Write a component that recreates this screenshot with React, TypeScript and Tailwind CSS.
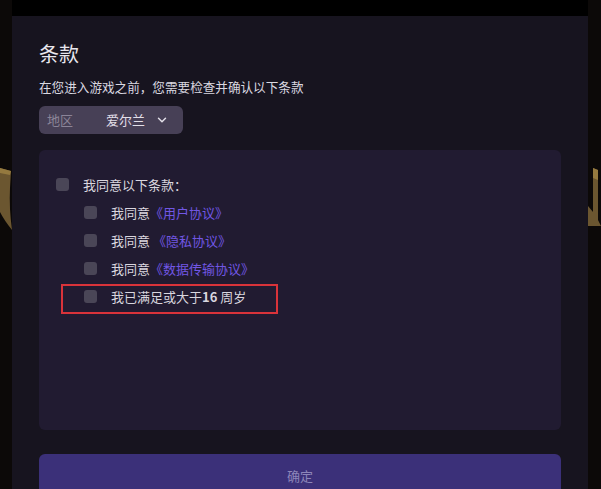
import React from "react";
import { ChevronDown } from "lucide-react";

const font = { fontFamily: '"Noto Sans CJK SC", "Noto Sans", sans-serif' };

function Box() {
  return <span className="w-[13px] h-[13px] shrink-0 rounded-[3px] bg-[#4a4657]" />;
}

function Row({ indent, children }: { indent?: boolean; children: React.ReactNode }) {
  return (
    <div className={`h-[28px] flex items-center gap-[14px] ${indent ? "pl-[45px]" : "pl-[17px]"}`}>
      <Box />
      <span className="text-[13px] text-[#d9d6df] leading-none">{children}</span>
    </div>
  );
}

export default function App() {
  return (
    <div className="w-[601px] h-[489px] flex overflow-hidden bg-[#0c0908]" style={font}>
      {/* left edge */}
      <div className="w-[12px] shrink-0 flex flex-col">
        <div className="h-[168px]" />
        <svg width="12" height="62" viewBox="0 0 12 62">
          <path d="M0 0 L11 3 L10 20 Q9 40 12 62 Q4 52 0 44 Z" fill="#6b5630" />
          <path d="M0 0 L11 3 L10 7 L0 5 Z" fill="#94793f" />
        </svg>
      </div>

      <div className="w-[576px] shrink-0 flex flex-col">
        <div className="h-[16px] bg-black shrink-0" />
        <div className="flex-1 bg-[#17141f] px-[27px] pt-[24px] flex flex-col">
          <h1 className="text-[20px] leading-[28px] text-[#e9e7ee]">条款</h1>
          <p className="mt-[9px] text-[12.6px] leading-[20px] text-[#dad8e0]">
            在您进入游戏之前，您需要检查并确认以下条款
          </p>
          <div className="mt-[9px] w-[144px] h-[28px] rounded-md bg-[#474056] flex items-center pl-[8px] pr-[14px]">
            <span className="text-[13px] text-[#8b8498]">地区</span>
            <span className="ml-auto text-[13px] text-[#e2dfe8]">爱尔兰</span>
            <ChevronDown className="ml-[10px] w-[14px] h-[14px] text-[#e2dfe8]" strokeWidth={2.5} />
          </div>

          <div className="relative mt-[16px] h-[280px] rounded-md bg-[#211b31] pt-[20px]">
            <Row>我同意以下条款：</Row>
            <Row indent>
              我同意<span className="text-[#7157e4]">《用户协议》</span>
            </Row>
            <Row indent>
              我同意 <span className="text-[#7157e4]">《隐私协议》</span>
            </Row>
            <Row indent>
              我同意<span className="text-[#7157e4]">《数据传输协议》</span>
            </Row>
            <Row indent>
              我已满足或大于<span className="font-bold">16</span> 周岁
            </Row>
            <div className="absolute left-[22px] top-[134px] w-[217px] h-[30px] border-2 border-[#d9333a]" />
          </div>

          <button className="mt-[24px] h-[44px] rounded-md bg-[#3b3079] text-[13px] text-[#8d86b9]">
            确定
          </button>
        </div>
      </div>

      {/* right edge */}
      <div className="flex-1 flex flex-col">
        <div className="h-[168px]" />
        <svg width="13" height="58" viewBox="0 0 13 58">
          <path d="M5 0 L10 2 L10 52 L13 58 L0 58 L0 38 L5 44 Z" fill="#6b5630" />
          <path d="M5 0 L10 2 L10 12 L5 10 Z" fill="#94793f" />
        </svg>
      </div>
    </div>
  );
}
